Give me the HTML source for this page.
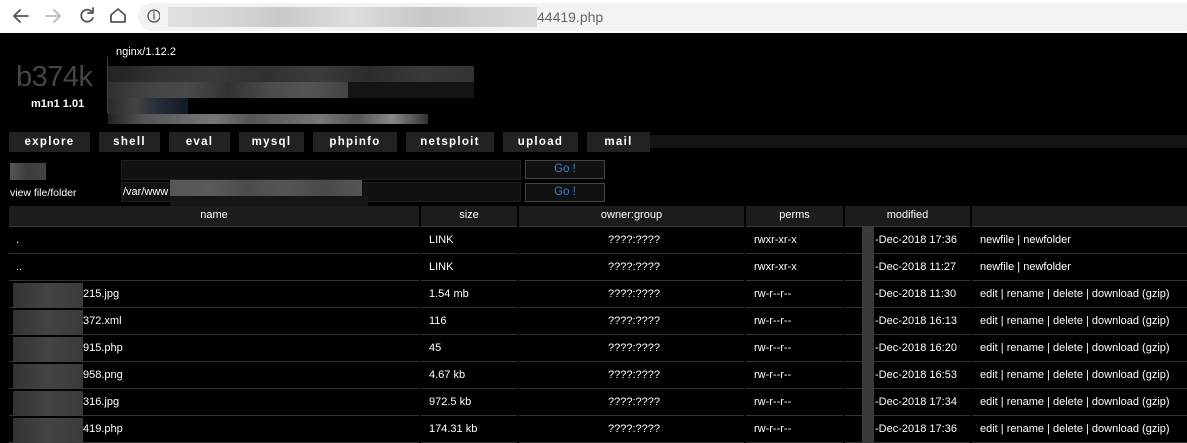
<!DOCTYPE html>
<html><head><meta charset="utf-8"><style>
*{margin:0;padding:0;box-sizing:border-box}
body{width:1187px;height:440px;overflow:hidden;background:#000;font-family:"Liberation Sans",sans-serif;font-size:11px;color:#fff;position:relative}
.a{position:absolute}
.top{left:0;top:0;width:1187px;height:33px;background:#fff}
.addr{left:138px;top:3px;width:1060px;height:28px;border-radius:14px;background:#f1f3f4}
.tab{top:132px;height:20px;background:#222;color:#fff;font-weight:bold;letter-spacing:1.3px;font-size:11.5px;text-align:center;line-height:20px}
.inp{background:#111;border:1px solid #1e1e1e;height:20px;left:121px;width:400px}
.go{left:525px;width:80px;height:19px;border:1px solid #444;background:#111;color:#3a7fc8;text-align:center;line-height:17px;font-size:11.5px}
.th{top:206px;height:21px;background:#1c1c1c;border-bottom:1px solid #3a3a3a;text-align:center;line-height:19px;font-size:11px}
.row{left:9px;width:1178px;height:27px}
.c{position:absolute;top:0;height:27px;line-height:26px;border-bottom:1px solid #333}
.blk{position:absolute}
</style></head><body>
<div class="a top"></div>
<div class="a addr"></div>
<svg class="a" style="left:0;top:0" width="160" height="33">
<g fill="none" stroke-width="1.8" stroke-linecap="round" stroke-linejoin="round">
<path d="M28 16H14M20 10l-6 6 6 6" stroke="#555"/>
<path d="M46 16h14M54 10l6 6-6 6" stroke="#bbb"/>
<path d="M92 12a6 6 0 1 0 0.8 6" stroke="#555"/><path d="M93 8v5h-5" stroke="#555"/>
<path d="M111 15l7-6 7 6v7h-14z" stroke="#555"/>
<circle cx="154" cy="16" r="6" stroke="#555" stroke-width="1.3"/><path d="M154 14v5" stroke="#555" stroke-width="1.3"/>
</g><circle cx="154" cy="12" r="0.9" fill="#555"/></svg>
<div class="a" style="left:168px;top:7px;width:369px;height:20px;background:linear-gradient(90deg,#e0e1e2,#d2d3d4 20%,#c8c9ca 30%,#dcdddd 50%,#c6c7c8 70%,#dadbdc)"></div>
<div class="a" style="left:537px;top:8px;font-size:14px;color:#666;line-height:18px">44419.php</div>

<div class="a" style="left:16px;top:61px;font-size:29px;color:#454545;line-height:32px;letter-spacing:-0.5px">b374k</div>
<div class="a" style="left:31px;top:98px;font-weight:bold;font-size:11px">m1n1 1.01</div>
<div class="a" style="left:107px;top:57px;width:1px;height:56px;background:#444"></div>
<div class="a" style="left:116px;top:46px;font-size:11px">nginx/1.12.2</div>
<div class="a" style="left:108px;top:66px;width:366px;height:16px;background:linear-gradient(90deg,#222,#333,#3a3a3a,#303030,#3c3c3c,#2c2c2c,#393939,#333)"></div>
<div class="a" style="left:108px;top:82px;width:240px;height:16px;background:linear-gradient(90deg,#303030,#444,#4a4a4a,#333,#4a4a4a,#555,#444)"></div>
<div class="a" style="left:348px;top:82px;width:126px;height:16px;background:#141414"></div>
<div class="a" style="left:108px;top:98px;width:80px;height:16px;background:linear-gradient(90deg,#2a2a2a,#444,#222a35,#111a25)"></div>
<div class="a" style="left:108px;top:114px;width:320px;height:10px;background:linear-gradient(90deg,#222,#555,#666,#777,#555,#666,#777,#555,#888,#333)"></div>

<div class="a" style="left:650px;top:135px;width:537px;height:13px;background:#141414"></div>
<div class="a tab" style="left:9px;width:81px">explore</div>
<div class="a tab" style="left:99px;width:61px">shell</div>
<div class="a tab" style="left:169px;width:61px">eval</div>
<div class="a tab" style="left:239px;width:65px">mysql</div>
<div class="a tab" style="left:313px;width:84px">phpinfo</div>
<div class="a tab" style="left:406px;width:88px">netsploit</div>
<div class="a tab" style="left:503px;width:75px">upload</div>
<div class="a tab" style="left:587px;width:63px">mail</div>

<div class="a" style="left:10px;top:163px;width:36px;height:17px;background:linear-gradient(90deg,#555,#3c3c3c,#444)"></div>
<div class="a inp" style="top:160px"></div>
<div class="a go" style="top:160px">Go !</div>
<div class="a" style="left:10px;top:187px;font-size:10.5px">view file/folder</div>
<div class="a inp" style="top:182px"></div>
<div class="a" style="left:123px;top:186px;font-size:11px">/var/www</div>
<div class="a go" style="top:183px">Go !</div>
<div class="a" style="left:170px;top:180px;width:192px;height:16px;background:linear-gradient(90deg,#555,#5a5a5a,#4c4c4c,#555,#4a4a4a,#555)"></div>
<div class="a" style="left:170px;top:196px;width:198px;height:16px;background:#151515"></div>

<div class="a th" style="left:9px;width:410px">name</div>
<div class="a th" style="left:421px;width:96px">size</div>
<div class="a th" style="left:519px;width:225px">owner:group</div>
<div class="a th" style="left:746px;width:97px">perms</div>
<div class="a th" style="left:845px;width:125px">modified</div>
<div class="a th" style="left:972px;width:215px"></div>

<div id="rows"></div>
<script>
var d=[[".","LINK","rwxr-xr-x","17:36",1],["..","LINK","rwxr-xr-x","11:27",1],["215.jpg","1.54 mb","rw-r--r--","11:30",0],["372.xml","116","rw-r--r--","16:13",0],["915.php","45","rw-r--r--","16:20",0],["958.png","4.67 kb","rw-r--r--","16:53",0],["316.jpg","972.5 kb","rw-r--r--","17:34",0],["419.php","174.31 kb","rw-r--r--","17:36",0]];
var h="";
d.forEach(function(r,i){var t=227+i*27;
var nm=r[4]?'<span style="position:absolute;left:7px">'+r[0]+'</span>':'<span style="position:absolute;left:74px">'+r[0]+'</span><span class="blk" style="left:4px;top:2px;width:70px;height:25px;background:linear-gradient(90deg,#333,#444,#3a3a3a)"></span>';
var act=r[4]?'newfile | newfolder':'edit | rename | delete | download (gzip)';
h+='<div class="a row" style="top:'+t+'px">'+
'<div class="c" style="left:0;width:410px">'+nm+'</div>'+
'<div class="c" style="left:412px;width:96px;padding-left:8px">'+r[1]+'</div>'+
'<div class="c" style="left:510px;width:225px;padding-left:89px">????:????</div>'+
'<div class="c" style="left:737px;width:97px;padding-left:8px">'+r[2]+'</div>'+
'<div class="c" style="left:836px;width:125px;padding-left:30px">-Dec-2018 '+r[3]+'<span class="blk" style="left:17px;top:0;width:12px;height:27px;background:#3a3a3a"></span></div>'+
'<div class="c" style="left:963px;width:215px;padding-left:8px">'+act+'</div></div>';});
document.getElementById("rows").innerHTML=h;
</script>
</body></html>
